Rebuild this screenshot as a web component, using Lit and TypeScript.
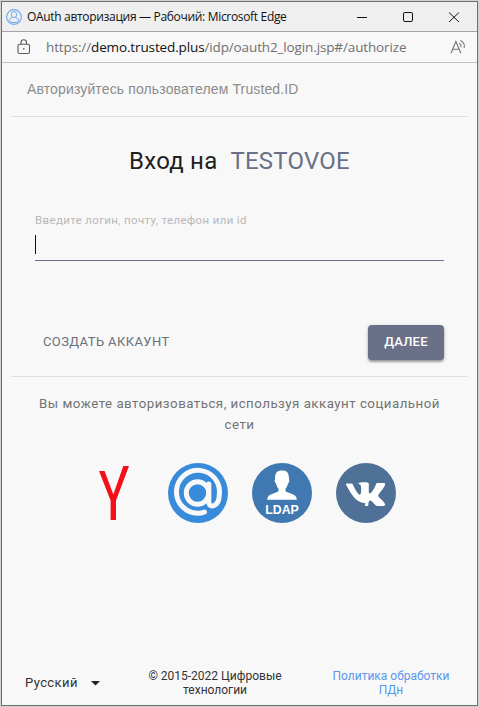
import { LitElement, html, css, svg } from "lit";
import { customElement } from "lit/decorators.js";

const userIcon = html`<svg class="favicon" width="16" height="16" viewBox="0 0 16 16" fill="none" stroke="#6fa8ee">
  <circle cx="8" cy="8" r="7.4" stroke-width="1.1"/>
  <ellipse cx="8" cy="5.6" rx="2.7" ry="3"/>
  <path d="M6.3 8.2C6 9.5 3.3 9.3 3.1 11.5c0 1 2 2 4.9 2s4.900-1 4.900-2C12.700 9.300 10 9.500 9.700 8.200"/>
</svg>`;

const lockIcon = html`<svg class="lock" width="14" height="16" viewBox="0 0 14 16" fill="none" stroke="#5c5c5c" stroke-width="1.1">
  <rect x="1" y="5.300" width="11.500" height="9.200" rx="1.500"/>
  <path d="M4 5.300V3.500a2.750 2.750 0 0 1 5.500 0v1.800"/>
  <circle cx="6.750" cy="9.900" r=".8" fill="#5c5c5c" stroke="none"/>
</svg>`;

const readIcon = html`<svg class="read" width="17" height="16" viewBox="0 0 17 16" fill="none" stroke="#757575" stroke-width="1.1">
  <path d="M1 14.300L5.900 2.500L10.800 14.300M2.700 10.200H9.100"/>
  <path d="M9.300 4.300a4 4 0 0 1 1.700 4M10.500 1.600a6.800 6.800 0 0 1 3.700 7.400" />
</svg>`;

const providers = [
  {
    name: "Яндекс",
    art: svg`<path fill="#f50f19" d="M15 8H20.600L29.300 31.500L39.300 3H45L32 37.500V57H26.600V37.500Z"/>`,
  },
  {
    name: "Mail",
    art: svg`<circle cx="30" cy="30" r="30" fill="#388adb"/>
      <g fill="none" stroke="#f8f8f8" stroke-width="5" stroke-linecap="round">
        <circle cx="29.500" cy="30" r="11.200"/>
        <path d="M40.800 21V39.500C41 45.300 51.300 44.500 51.300 31.500A21.500 21.500 0 1 0 29.800 50.300Q33.500 50.300 36.500 49"/>
      </g>`,
  },
  {
    name: "LDAP",
    art: svg`<circle cx="30" cy="30" r="30" fill="#4079b2"/>
      <path fill="#fff" d="M30 7.500c5 0 7.200 2.500 6.900 8.500 .9 1 .2 4-1 4.700-.4 2.300-1.400 3.800-2.400 5v2.300c1.500 2 8.500 2.500 10.300 5.500q1 1.500 1 3.200H15.200q0-1.700 1-3.200c1.800-3 8.800-3.500 10.300-5.500v-2.300c-1-1.200-2-2.700-2.400-5-1.200-.7-1.900-3.700-1-4.700C22.800 10 25 7.500 30 7.500Z"/>
      <text class="ldap" x="30" y="51" text-anchor="middle" fill="#fff">LDAP</text>`,
  },
  {
    name: "VK",
    art: svg`<circle cx="30" cy="30" r="30" fill="#4f7198"/>
      <path fill="#fff" d="M28.700 43h2.300s.8-.1 1.100-.5c.4-.4.3-1.100.3-1.100s0-3.300 1.500-3.800c1.600-.5 3.600 3.200 5.700 4.600 1.600 1.100 2.800.9 2.800.9h4.900s2.900-.2 1.500-2.500c-.1-.2-.8-1.700-4.200-4.900-3.600-3.300-3.100-2.800 1.200-8.500 2.600-3.500 3.700-5.600 3.300-6.500-.3-.9-1.300-.7-1.300-.7h-6.300s-.5 0-.8.200c-.3.200-.5.600-.5.600s-1 2.700-2.300 5c-2.800 4.700-3.900 5-4.300 4.700-1-.7-.8-2.700-.8-4.100 0-4.500.7-6.300-1.300-6.800-.7-.2-1.200-.3-2.900-.3-2.200 0-4.100 0-5.200.5-.7.400-1.300 1.100-.9 1.200.4.100 1.400.3 1.900 1 .7.900.7 3.100.7 3.100s.4 5.800-.9 6.500c-.9.500-2.200-.5-4.900-5.100-1.400-2.400-2.500-5-2.500-5s-.2-.5-.5-.7c-.4-.3-1-.4-1-.4h-4.300s-.7 0-1 .3c-.3.300 0 .9 0 .9s4.500 9.500 9.600 14.400c4.700 4.500 10 4.200 10 4.200Z"/>`,
  },
];

@customElement("app-root")
export class AppRoot extends LitElement {
  static styles = css`
    :host { display: block; height: 707px; box-sizing: border-box; padding: 1px; background: #d2d2d2; font-family: Roboto, "Noto Sans", sans-serif; }
    * { box-sizing: border-box; }
    svg { display: block; flex: none; }
    .window { width: 477px; height: 705px; border: 1px solid #6c6e70; background: #f8f8f8; display: flex; flex-direction: column; }
    .title { height: 30px; flex: none; display: flex; align-items: center; background: #efefef; border-bottom: 1px solid #a5a5a5; padding: 0 2px 0 4px; font: 12px/16px "Open Sans", "Noto Sans", sans-serif; color: #111; }
    .caption { margin-left: 5px; white-space: nowrap; letter-spacing: -.32px; }
    .controls { margin-left: auto; }
    .address { height: 31px; flex: none; display: flex; align-items: center; border-bottom: 1px solid #c3c3c3; padding: 0 10px 0 15px; font: 13.5px/18px "Open Sans", "Noto Sans", sans-serif; color: #717171; }
    .url { margin-left: 15px; white-space: nowrap; letter-spacing: -.13px; }
    .url b { font-weight: 400; color: #111; }
    .read { margin-left: auto; }
    .page { flex: 1; display: flex; flex-direction: column; padding: 0 9px; }
    .hint { height: 54px; flex: none; border-bottom: 1px solid #e0e0e0; padding: 17px 16px 0; font: 14px/18px "Liberation Sans", sans-serif; color: #8c8c8c; letter-spacing: .13px; white-space: nowrap; }
    h1 { margin: 28px 0 0; font-size: 24px; line-height: 32px; font-weight: 400; display: flex; justify-content: center; gap: 13px; color: #1f1f1f; white-space: nowrap; letter-spacing: .22px; }
    h1 .app { color: #697087; }
    .field { margin: 34px 24px 0; height: 50px; border-bottom: 1px solid #697087; }
    .label { font-size: 11.5px; line-height: 18px; color: #b8b8b8; letter-spacing: .35px; }
    .caret { width: 1px; height: 19px; margin-top: 6px; background: #111; }
    .actions { margin: 64px 24px 0; height: 35px; display: flex; align-items: center; justify-content: space-between; font-size: 13px; }
    .create { margin: -2px 0 0 8px; color: #697078; letter-spacing: .4px; }
    .next { width: 76px; height: 35px; border: 0; border-radius: 4px; background: #697087; color: #fff; font: 500 13px/34px Roboto, sans-serif; padding: 0 0 1px; letter-spacing: .2px; box-shadow: 0 2px 2px rgba(0,0,0,.28), 0 1px 4px rgba(0,0,0,.18); }
    .social { margin-top: 16px; border-top: 1px solid #e0e0e0; padding-top: 16px; text-align: center; font-size: 13.3px; line-height: 21px; color: #737373; letter-spacing: .48px; }
    .providers { display: flex; justify-content: center; gap: 24px; margin: 28px 0 0 1px; }
    .ldap { font: bold 12.300px "Liberation Sans", sans-serif; letter-spacing: 0; }
    footer { margin-top: auto; height: 45px; display: flex; font-size: 12px; line-height: 14px; color: #333; text-align: center; white-space: nowrap; }
    .lang { width: 90px; padding: 9px 0 0 14px; display: flex; align-items: flex-start; font-size: 13px; line-height: 28px; letter-spacing: .4px; }
    .lang svg { margin: 12px 0 0 13px; }
    .copy { width: 150px; margin-left: 39px; padding-top: 9px; }
    .policy { width: 150px; margin-left: 26px; padding-top: 9px; color: #5a96ee; }
  `;

  render() {
    return html`<div class="window">
      <div class="title">${userIcon}<span class="caption">OAuth авторизация — Рабочий: Microsoft Edge</span>
        <svg class="controls" width="118" height="16" viewBox="0 0 118 16" fill="none" stroke="#111" stroke-width="1">
          <path d="M0 8.500H10"/><rect x="46.500" y="3.500" width="9" height="9" rx="1.500"/><path d="M92 3.500L102 13M102 3.500L92 13"/>
        </svg>
      </div>
      <div class="address">${lockIcon}<span class="url">https://<b>demo.trusted.plus</b>/idp/oauth2_login.jsp#/authorize</span>${readIcon}</div>
      <div class="page">
        <div class="hint">Авторизуйтесь пользователем Trusted.ID</div>
        <h1><span class="on">Вход на</span><span class="app">TESTOVOE</span></h1>
        <div class="field"><div class="label">Введите логин, почту, телефон или id</div><div class="caret"></div></div>
        <div class="actions"><span class="create">СОЗДАТЬ АККАУНТ</span><button class="next">ДАЛЕЕ</button></div>
        <div class="social">Вы можете авторизоваться, используя аккаунт социальной<br>сети</div>
        <div class="providers">${providers.map(p => html`<svg width="60" height="60" viewBox="0 0 60 60" aria-label=${p.name}>${p.art}</svg>`)}</div>
        <footer>
          <div class="lang">Русский<svg width="9" height="5" viewBox="0 0 9 5"><path d="M0 0H9L4.500 4.500Z" fill="#222"/></svg></div>
          <div class="copy">© 2015-2022 Цифровые<br>технологии</div>
          <div class="policy">Политика обработки<br>ПДн</div>
        </footer>
      </div>
    </div>`;
  }
}
